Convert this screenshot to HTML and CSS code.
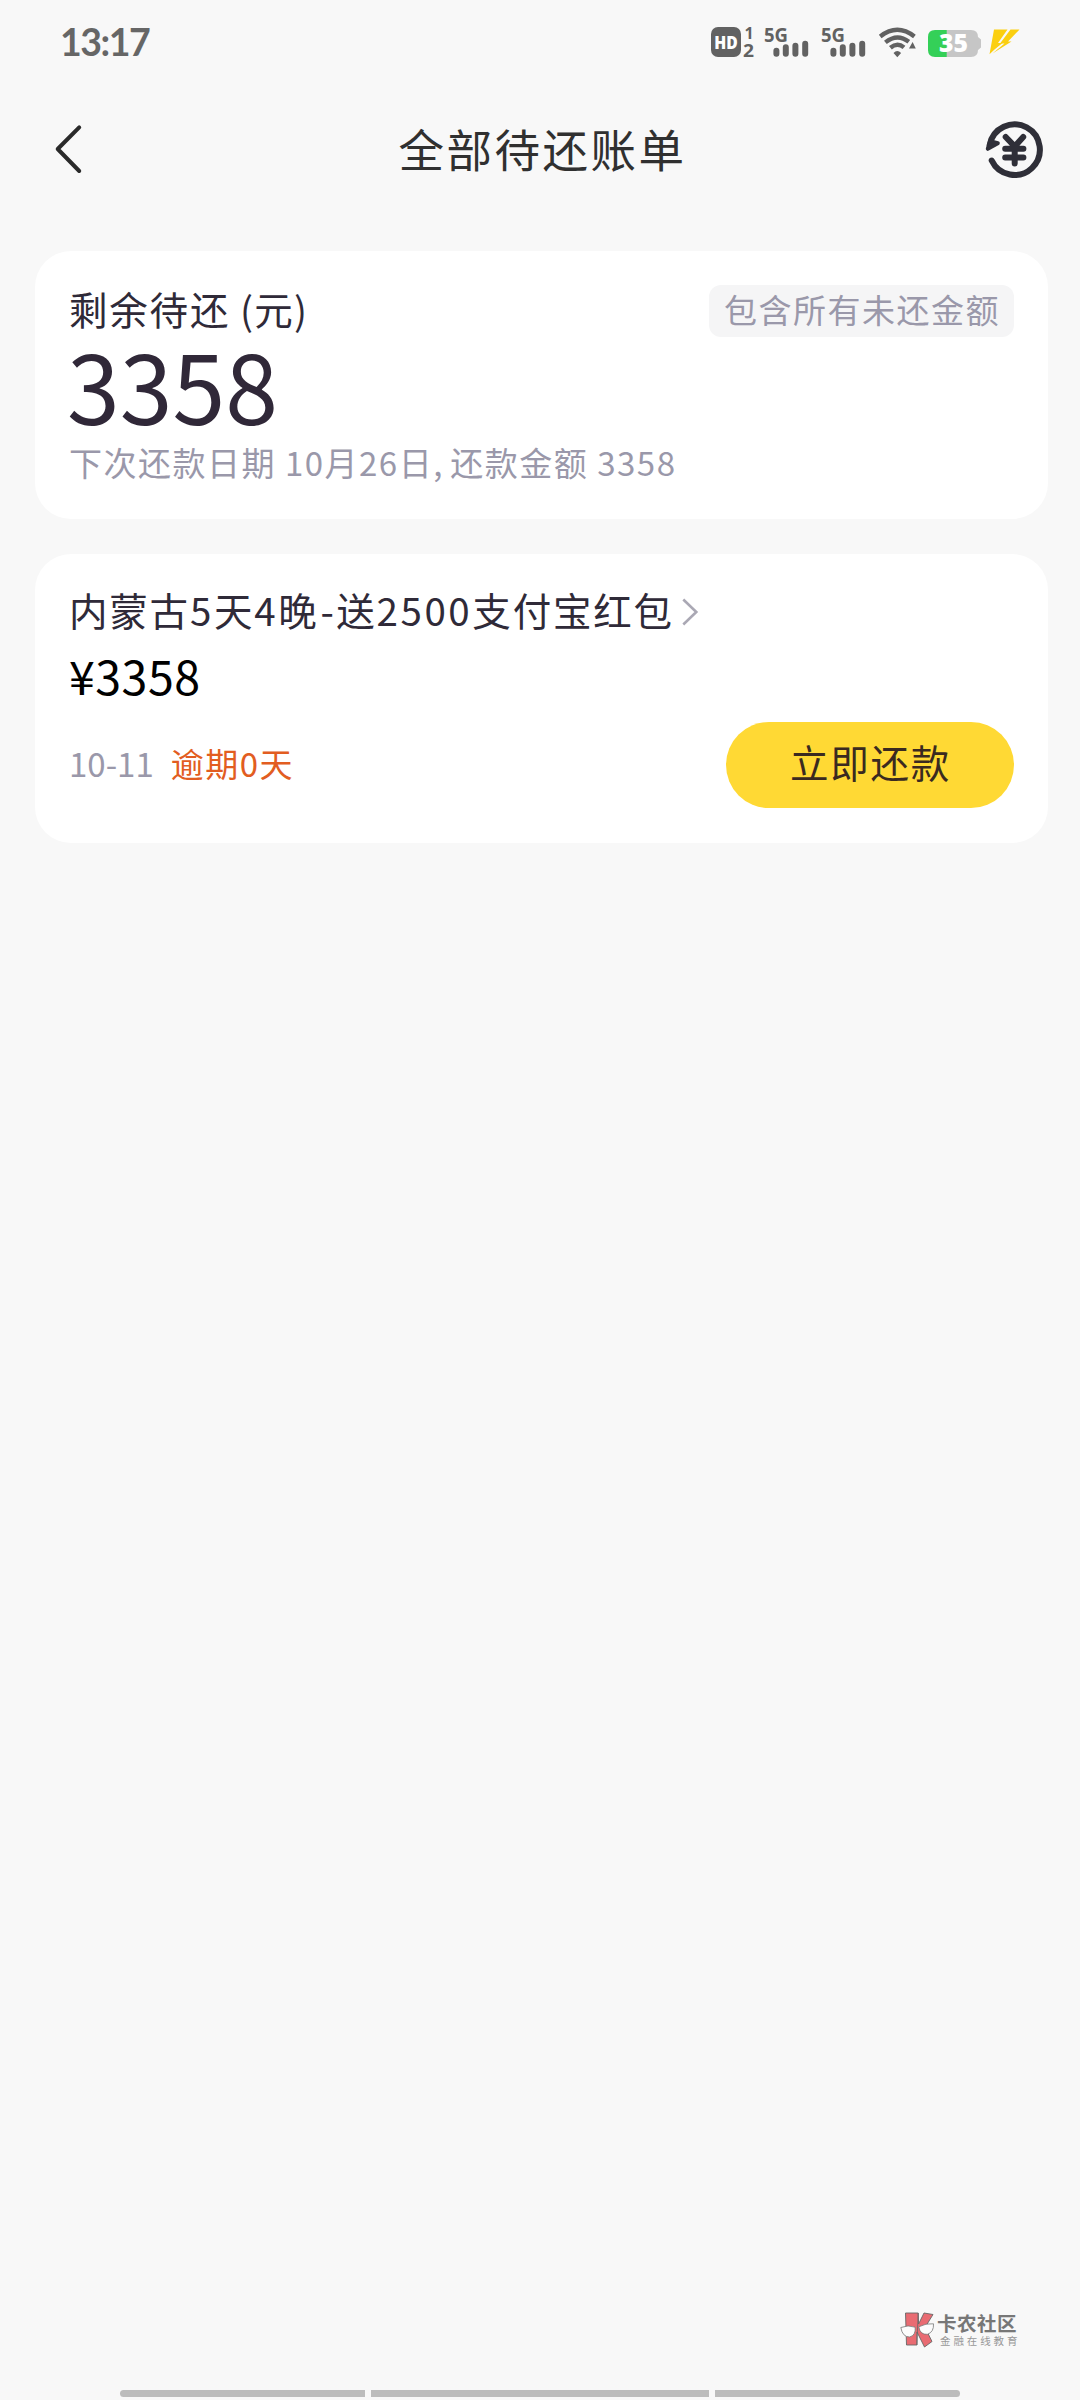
FILE: index.html
```html
<!DOCTYPE html>
<html lang="zh-CN">
<head>
<meta charset="utf-8">
<title>全部待还账单</title>
<link rel="stylesheet" href="styles.css">
</head>
<body>
<div class="screen">
  <header class="status">
    <span class="time">13:17</span>
    <div class="indicators">
      <svg class="hd" width="43" height="34" viewBox="0 0 43 34">
        <rect x="0" y="1" width="30" height="30" rx="7" fill="#626262"/>
        <text x="3.2" y="22.5" font-size="18" textLength="23.5" lengthAdjust="spacingAndGlyphs">HD</text>
        <text x="33.5" y="13" font-size="16">1</text>
        <text x="32" y="30.7" font-size="17" textLength="11" lengthAdjust="spacingAndGlyphs">2</text>
      </svg>
      <svg class="signal" width="46" height="34" viewBox="0 0 46 34">
        <text x="0" y="15.7" font-size="20" textLength="24" lengthAdjust="spacingAndGlyphs">5G</text>
        <path d="M12.4 24.8V27.8M21.8 21.2V27.8M31.4 19.8V27.8M41.2 17.8V27.8"/>
      </svg>
      <svg class="signal" width="46" height="34" viewBox="0 0 46 34">
        <text x="0" y="15.7" font-size="20" textLength="24" lengthAdjust="spacingAndGlyphs">5G</text>
        <path d="M12.4 24.8V27.8M21.8 21.2V27.8M31.4 19.8V27.8M41.2 17.8V27.8"/>
      </svg>
      <svg class="wifi" width="38" height="34" viewBox="0 0 38 34">
        <path d="M1.2 10.5Q18.3-2.8 35.4 10.5M6.4 16.4Q18.3 6.8 29.8 15.8M11.4 21.8Q18.3 16 25 21.4"/>
        <path class="solid" d="M14.5 27Q18.3 23.2 22.1 27L18.3 31.2ZM33.6 16L36.8 22.4H30Z"/>
      </svg>
      <svg class="battery" width="54" height="34" viewBox="0 0 54 34">
        <path fill="#c6c6c6" d="M18 4H43Q50 4 50 11L53 13.5V21.5L50 24Q50 31 43 31H18Z"/>
        <path fill="#34d058" d="M18.7 4H7Q0 4 0 11V24Q0 31 7 31H18.7Z"/>
        <text x="11" y="26" font-size="24" textLength="29" lengthAdjust="spacingAndGlyphs">35</text>
      </svg>
      <svg class="bolt" width="31" height="34" viewBox="0 0 31 34">
        <path fill="#fbcf10" d="M5 3.5H18.5L9 17H13.5L5.5 23.5 .5 28.2Z"/>
        <path fill="#fbcf10" d="M21.5 3.5H30.5L19 15.5H22.5L3.5 27.5 15.5 17.5H11Z"/>
      </svg>
    </div>
  </header>
  <nav class="nav">
    <svg class="back" width="30" height="52" viewBox="0 0 30 52"><path d="M26.2 4.3L4.7 26 26.2 48"/></svg>
    <h1 class="title">全部待还账单</h1>
    <svg class="records" width="60" height="60" viewBox="0 0 60 60">
      <path d="M4.7 26A25.3 25.3 0 1 1 6.7 41.5"/>
      <path class="head" d="M2.8 29.8L5 22.2 12.8 24.2Z"/>
      <path d="M20.7 18L29.7 27.4 38.2 18M20.2 29.8H38.4M20.2 38.6H38.4M29.7 28V44.5"/>
    </svg>
  </nav>
  <main class="cards">
    <section class="card summary">
      <div class="summary-head">
        <span class="label">剩余待还<span class="unit"> (元)</span></span>
        <span class="badge">包含所有未还金额</span>
      </div>
      <div class="total">3358</div>
      <p class="next">下次还款日期 10月26日<span class="comma">, </span>还款金额 <span class="num">3358</span></p>
    </section>
    <section class="card bill">
      <div class="bill-title">
        <span>内蒙古<span class="num">5</span>天<span class="num">4</span>晚<span class="dash">-</span>送<span class="num">2500</span>支付宝红包</span>
        <svg class="chevron" width="16" height="28" viewBox="0 0 16 28"><path d="M1.3 1.5L14.3 14 1.3 26.5"/></svg>
      </div>
      <div class="price">¥3358</div>
      <div class="bill-foot">
        <span class="date">10-11</span>
        <span class="overdue">逾期0天</span>
        <button class="pay">立即还款</button>
      </div>
    </section>
  </main>
  <footer class="footer">
    <div class="brand">
      <svg class="brand-logo" width="35" height="36" viewBox="0 0 35 36">
        <path fill="#e96b72" stroke="#666" stroke-width=".9" d="M5.5 1H18.2L18.6 12 24 1 33 2.5 25 15.5 32 29.5 24.5 35 17 20V33H6.5Z"/>
        <path fill="none" stroke="#666" stroke-width=".8" d="M18.2 1L16.8 33"/>
        <path fill="#fcfcfc" stroke="#777" stroke-width=".8" d="M.8 15.5Q8 12.5 15.2 15.2 16 23.5 9.5 25 2.5 25 .8 15.5ZM18.8 14.8Q26 11 33.5 11.8 34 20 27.5 22.3 20 23 18.8 14.8Z"/>
      </svg>
      <div class="brand-text">
        <span class="brand-name">卡农社区</span>
        <span class="brand-sub">金融在线教育</span>
      </div>
    </div>
    <div class="gesture"><i class="side"></i><i class="mid"></i><i class="side"></i></div>
  </footer>
</div>
</body>
</html>
```
FILE: styles.css
```css
* { box-sizing: border-box; }
body { margin: 0; background: #f8f8f8; font-family: "Noto Sans CJK SC", sans-serif; color: #2f2a38; }
h1, p { margin: 0; font-weight: 400; }
svg { display: block; flex: none; overflow: visible; }
.screen { width: 1080px; height: 2400px; display: flex; flex-direction: column; overflow: hidden; }

.status { height: 86px; padding: 25px 60px 0 60px; display: flex; justify-content: space-between; align-items: flex-start; }
.time { font: 700 37.5px/34px Lato, sans-serif; color: #666; letter-spacing: -1.5px; }
.indicators { display: flex; padding-top: 1px; }
.indicators text { font-family: "Open Sans", sans-serif; font-weight: 700; fill: #626262; }
.hd { margin-right: 10px; }
.indicators .hd text:first-of-type, .indicators .battery text { fill: #fff; font-weight: 800; }
.signal { margin-right: 11px; }
.signal path { stroke: #626262; stroke-width: 6; stroke-linecap: round; }
.wifi { margin-right: 11px; margin-left: 1px; }
.wifi path { fill: none; stroke: #626262; stroke-width: 4.4; }
.wifi .solid { fill: #626262; stroke: none; }
.battery { margin-right: 7px; }

.nav { height: 126px; padding: 0 35px 0 53px; display: flex; justify-content: space-between; align-items: center; }
.back path { fill: none; stroke: #2a2a2a; stroke-width: 4; stroke-linecap: round; stroke-linejoin: round; }
.title { font-size: 45.5px; line-height: 60px; letter-spacing: 2.5px; color: #303030; margin-left: 17px; margin-top: -3px; }
.records path { fill: none; stroke: #2f2f38; stroke-width: 6; stroke-linecap: round; stroke-linejoin: round; }
.records .head { fill: #2f2f38; stroke-width: 4; }

.cards { padding: 39px 32px 0 35px; display: flex; flex-direction: column; gap: 35px; }
.card { background: #fff; border-radius: 36px; }
.summary { height: 268px; padding: 34px 34px 0 34px; }
.summary-head { display: flex; justify-content: space-between; height: 52px; }
.label { font-size: 38.5px; line-height: 47px; letter-spacing: 1.8px; }
.unit { letter-spacing: 1.2px; }
.badge { width: 305px; border-radius: 12px; background: #f5f5f6; color: #9a98aa; font-size: 33px; line-height: 48px; letter-spacing: 1.5px; padding-left: 15px; white-space: nowrap; }
.total { font-size: 95px; line-height: 94px; margin-left: -2px; color: #302838; }
.next { font-size: 33px; line-height: 62px; letter-spacing: 1.5px; color: #9a98aa; white-space: nowrap; }
.comma { letter-spacing: .3px; }
.bill { height: 289px; padding: 30px 34px 0 34px; }
.bill-title { display: flex; align-items: center; gap: 8px; font-size: 38.5px; line-height: 50px; letter-spacing: 1.8px; white-space: nowrap; }
.bill-title .num { letter-spacing: 2.6px; }
.dash { letter-spacing: 2.3px; padding-left: 2px; }
.chevron { margin-top: 6px; }
.chevron path { fill: none; stroke: #aaa8b4; stroke-width: 2.6; }
.price { font-size: 46.5px; line-height: 81px; height: 80px; color: #000; letter-spacing: .5px; }
.bill-foot { display: flex; align-items: center; height: 86px; margin-top: 8px; font-size: 33px; }
.bill-foot span { line-height: 48px; margin-bottom: 4px; }
.date { color: #9a98aa; margin-right: 17px; }
.overdue { color: #e25d21; letter-spacing: 1.5px; }
.pay { margin-left: auto; width: 288px; height: 86px; border: 0; border-radius: 43px; background: #ffd934; color: #3a2a20; font: 38.5px/79px "Noto Sans CJK SC", sans-serif; letter-spacing: 1.8px; padding: 0 0 7px 1px; }

.footer { margin-top: auto; padding-bottom: 3px; display: flex; flex-direction: column; }
.brand { display: flex; align-self: flex-end; gap: 2px; margin-right: 62px; margin-bottom: 41px; height: 37px; }
.brand-text { display: flex; flex-direction: column; width: 81px; white-space: nowrap; }
.brand-name { font-size: 19.5px; line-height: 22px; font-weight: 700; letter-spacing: .5px; color: #777; }
.brand-sub { font-size: 10.5px; line-height: 14px; letter-spacing: 2.9px; color: #999; padding-left: 3px; }
.gesture { display: flex; justify-content: center; gap: 6px; height: 7px; }
.gesture i { background: #bcbcbc; }
.side { width: 245px; }
.mid { width: 338px; }
.side:first-child { border-radius: 4px 0 0 4px; }
.side:last-child { border-radius: 0 4px 4px 0; }
```
